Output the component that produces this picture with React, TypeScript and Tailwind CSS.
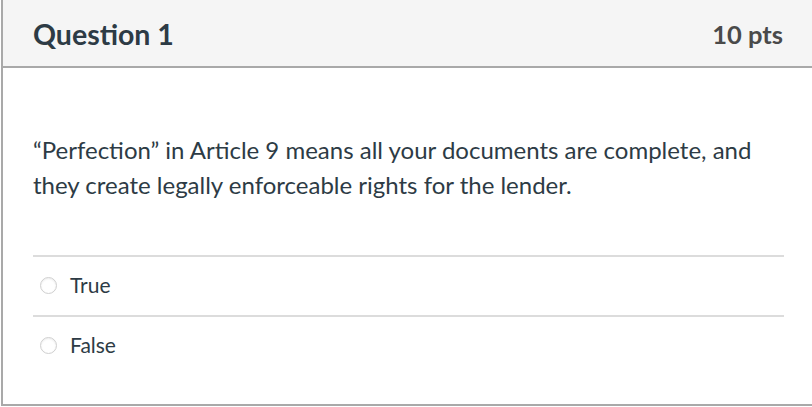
import React from "react";

function Radio() {
  return (
    <span className="w-[17px] h-[17px] rounded-full border border-[#cfcfcf] bg-white shadow-[inset_0_1px_2px_rgba(0,0,0,0.08)] shrink-0" />
  );
}

export default function App() {
  return (
    <div className="w-[812px] h-[407px] bg-white" style={{ fontFamily: "Lato, 'Open Sans', sans-serif" }}>
      <div className="ml-[1px] w-[811px] h-[406px] border-l-2 border-b-2 border-[#a9a9a9] flex flex-col">
        <div className="h-[68px] bg-[#f5f5f5] border-b-2 border-[#a9a9a9] flex items-center justify-between pl-[30px] pr-[29px] pt-[2px]">
          <span className="text-[28.5px] font-bold text-[#2d3b45]">Question 1</span>
          <span className="text-[25.5px] font-bold text-[#4a4a4a]">10 pts</span>
        </div>
        <div className="flex-1 pl-[30px] pr-[28px] pt-[64px] text-[#2d3b45]">
          <p className="text-[24px] leading-[35px]">
            “Perfection” in Article 9 means all your documents are complete, and they create legally enforceable rights for the lender.
          </p>
          <div className="mt-[53px] border-t-2 border-[#dcdcdc]">
            <label className="flex items-center h-[58px] pl-[7px] pb-[2px] gap-[13px] text-[21px]">
              <Radio />
              <span>True</span>
            </label>
          </div>
          <div className="border-t-2 border-[#dcdcdc]">
            <label className="flex items-center h-[58px] pl-[7px] pb-[2px] gap-[13px] text-[21px]">
              <Radio />
              <span>False</span>
            </label>
          </div>
        </div>
      </div>
    </div>
  );
}
